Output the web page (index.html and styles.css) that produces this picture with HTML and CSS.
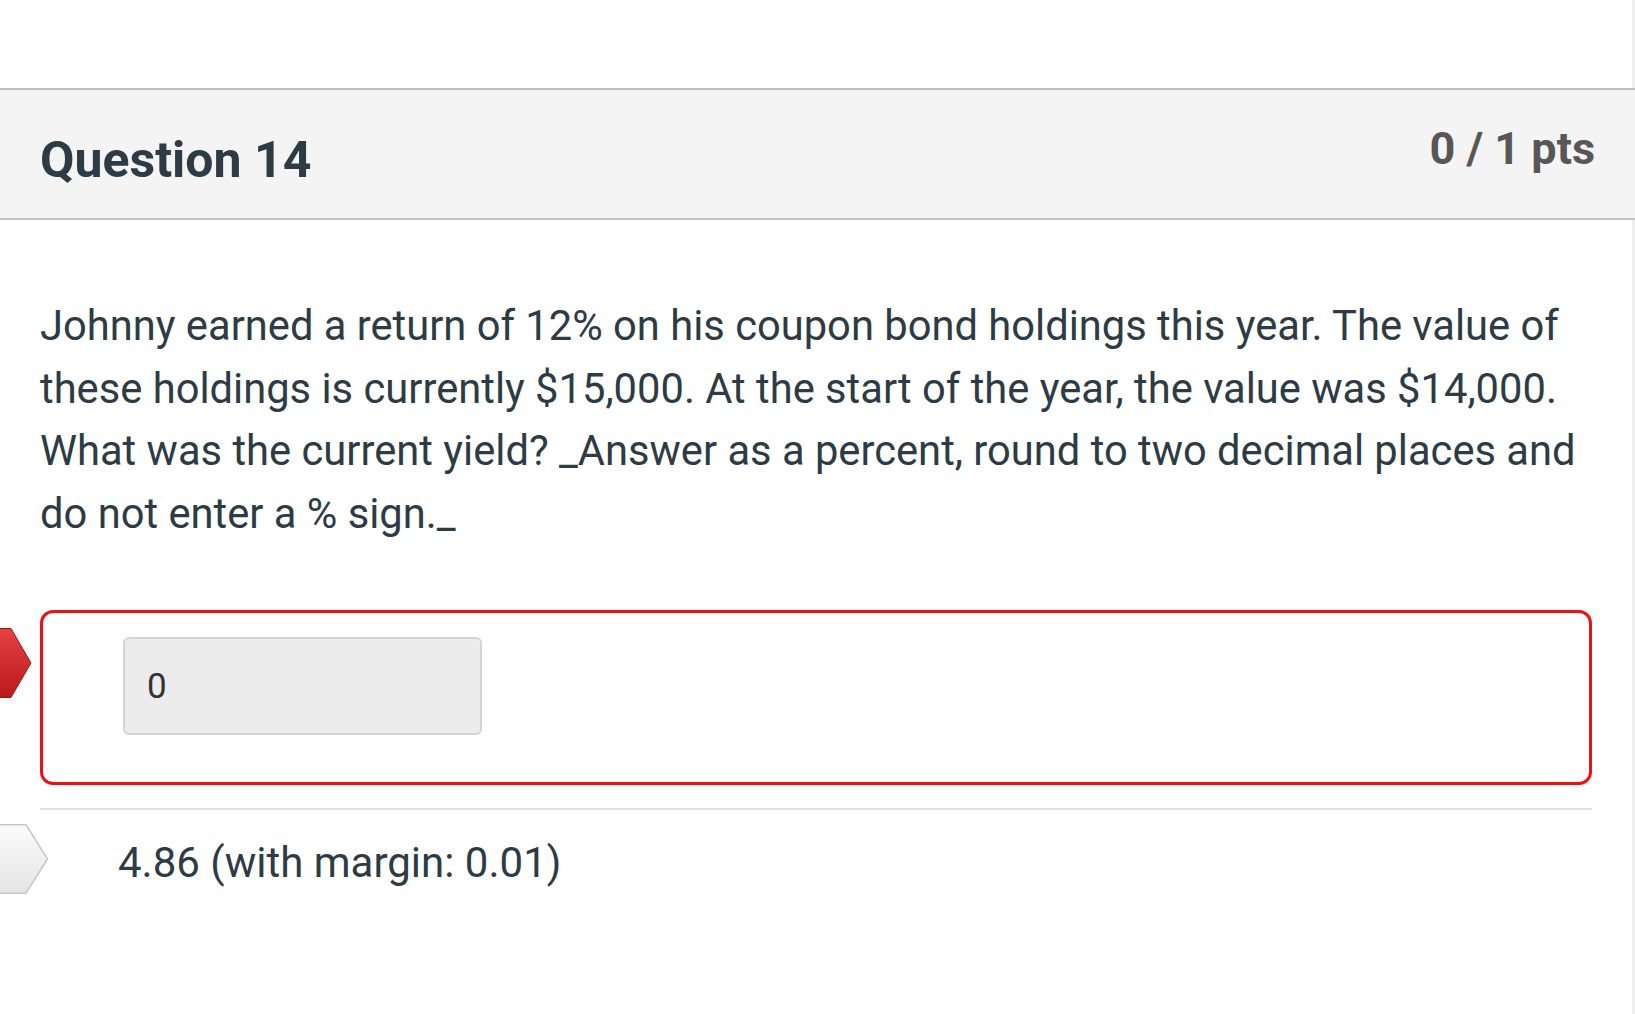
FILE: index.html
```html
<!DOCTYPE html>
<html lang="en">
<head>
<meta charset="utf-8">
<title>Question 14</title>
<link rel="stylesheet" href="styles.css">
</head>
<body>
<div class="page">
  <div class="q-header">
    <h2 class="q-title">Question 14</h2>
    <div class="q-points">0 / 1 pts</div>
  </div>
  <div class="q-body">
    <p class="q-text">Johnny earned a return of 12% on his coupon bond holdings this year. The value of these holdings is currently $15,000. At the start of the year, the value was $14,000. What was the current yield? _Answer as a percent, round to two decimal places and do not enter a % sign._</p>
    <div class="answer wrong">
      <svg class="marker marker-wrong" width="32" height="70" viewBox="0 0 32 70">
        <defs>
          <linearGradient id="gr" x1="0" y1="0" x2="0" y2="1">
            <stop offset="0" stop-color="#e44343"/>
            <stop offset="1" stop-color="#b8191b"/>
          </linearGradient>
        </defs>
        <path d="M-2 0.5 H11 L31 35 L11 69.5 H-2 Z" fill="url(#gr)" stroke="#a51416" stroke-width="1" stroke-linejoin="round"/>
      </svg>
      <div class="answer-input">0</div>
    </div>
    <div class="correct-row">
      <svg class="marker marker-correct" width="49" height="70" viewBox="0 0 49 70">
        <defs>
          <linearGradient id="gg" x1="0" y1="0" x2="0" y2="1">
            <stop offset="0" stop-color="#fbfbfb"/>
            <stop offset="1" stop-color="#e4e4e4"/>
          </linearGradient>
        </defs>
        <path d="M-2 0.75 H26 L47.5 35 L26 69.25 H-2 Z" fill="url(#gg)" stroke="#c9c9c9" stroke-width="1.5" stroke-linejoin="round"/>
      </svg>
      <div class="correct-text">4.86 (with margin: 0.01)</div>
    </div>
  </div>
</div>
</body>
</html>
```
FILE: styles.css
```css
html, body {
  margin: 0;
  padding: 0;
  background: #ffffff;
}

body {
  font-family: Roboto, "Liberation Sans", sans-serif;
  color: #2d3b45;
}

.page {
  padding-top: 88px;
  min-height: 926px;
  border-right: 3px solid #eeeeee;
}

.q-header {
  display: flex;
  justify-content: space-between;
  align-items: flex-start;
  background: #f4f4f4;
  border-top: 2px solid #bdbdbd;
  border-bottom: 2px solid #c4c4c4;
  height: 99px;
  padding: 29px 40px 0 40px;
  box-sizing: content-box;
  margin-right: -3px;
}

.q-title {
  margin: 11px 0 0 0;
  font-size: 50px;
  line-height: 60px;
  font-weight: 700;
  color: #2d3b45;
}

.q-points {
  font-size: 45px;
  line-height: 60px;
  font-weight: 700;
  color: #575757;
}

.q-body {
  padding: 0 40px 0 40px;
}

.q-text {
  margin: 75px 0 0 0;
  font-size: 41.7px;
  line-height: 62.6px;
  color: #2d3b45;
}

.answer {
  position: relative;
  margin-top: 65px;
  border: 3px solid #ee1111;
  border-radius: 13px;
  padding: 24px 0 0 80px;
  box-sizing: border-box;
  height: 175px;
}

.marker {
  position: absolute;
  display: block;
}

.marker-wrong {
  left: -43px;
  top: 15px;
}

.answer-input {
  width: 359px;
  height: 98px;
  box-sizing: border-box;
  background: #ececec;
  border: 2px solid #d4d4d4;
  border-radius: 6px;
  padding-left: 22px;
  font-size: 35px;
  line-height: 96px;
  color: #333333;
}

.correct-row {
  position: relative;
  margin-top: 23px;
  border-top: 2px solid #e2e2e2;
  padding: 18px 0 0 78px;
  height: 84px;
}

.marker-correct {
  left: -40px;
  top: 14px;
}

.correct-text {
  font-size: 42px;
  line-height: 69px;
  color: #2d3b45;
}
```
